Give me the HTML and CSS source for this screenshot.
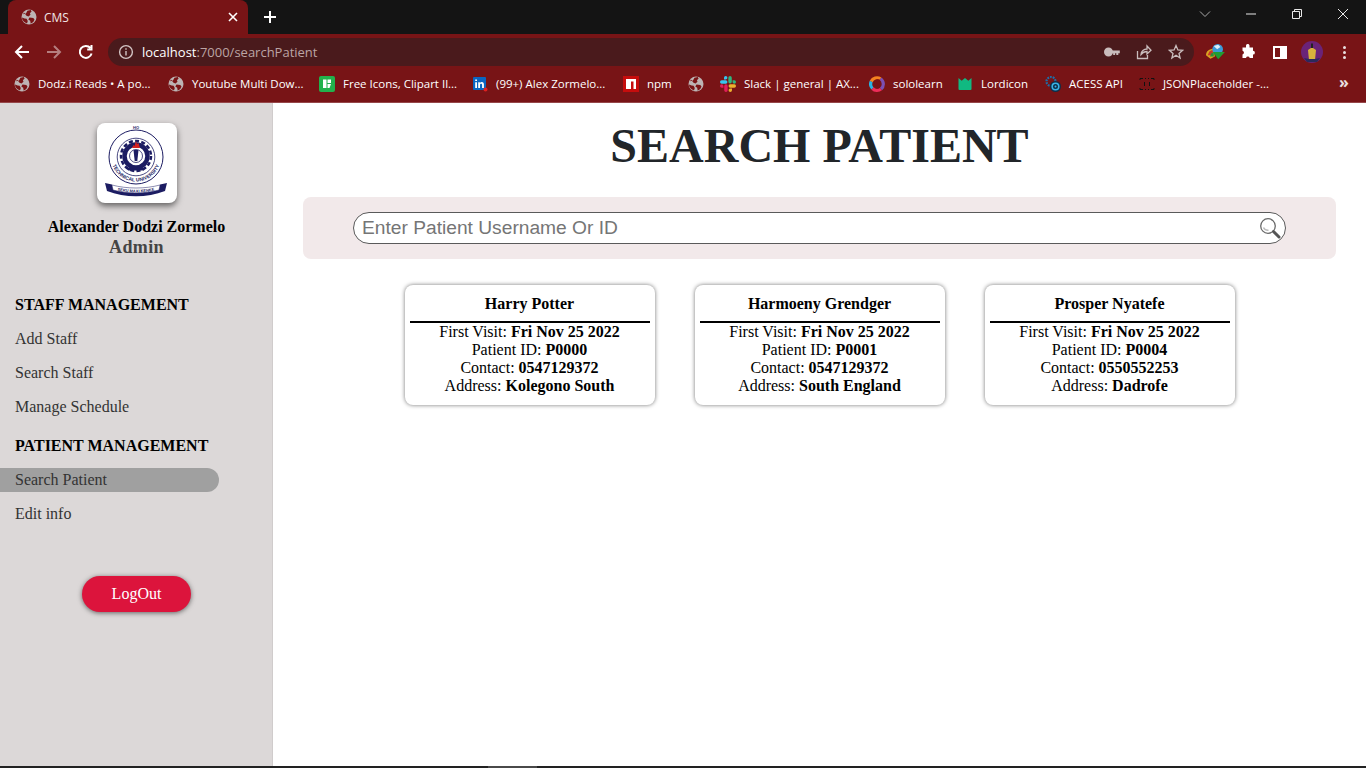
FILE: index.html
```html
<!DOCTYPE html>
<html lang="en">
<head>
<meta charset="utf-8">
<title>CMS</title>
<link rel="stylesheet" href="styles.css">
</head>
<body>
<svg class="defs" width="0" height="0" aria-hidden="true">
  <symbol id="globe" viewBox="0 0 16 16">
    <circle cx="8" cy="8" r="7.5" fill="#bdb4b4"/>
    <path d="M2.2 5.2 5 4.6l1.4-2.9L9.8.9l.8 1.6-1.7 1.8.6 1.4-2 1.900-2-.8L2.900 3.400ZM8.500 8.600l3.800.3 1.200 1.500-1.200 2.700-2.600 1.700-.5-3-1.900-1.300ZM1 8.500l2.600 1 2 .2 1.200 2.200-.8 2.600-2.400-1.200L1.400 11Z" fill="#7a1416"/>
  </symbol>
</svg>

<header class="chrome">
  <div class="tabstrip">
    <div class="tab">
      <svg class="ico16"><use href="#globe"/></svg>
      <span class="tab-title">CMS</span>
      <svg class="tab-close" viewBox="0 0 10 10"><path d="M1 1l8 8M9 1l-8 8"/></svg>
    </div>
    <svg class="newtab" viewBox="0 0 14 14"><path d="M7 1v12M1 7h12"/></svg>
    <div class="winbtns">
      <div class="winbtn"><svg viewBox="0 0 12 12"><path d="M1 3.500l5 5 5-5"/></svg></div>
      <div class="winbtn"><svg viewBox="0 0 12 12"><path d="M1 6h10"/></svg></div>
      <div class="winbtn"><svg viewBox="0 0 12 12"><path d="M1.500 3.500h7v7h-7zM3.500 3.500v-2h7v7h-2"/></svg></div>
      <div class="winbtn"><svg viewBox="0 0 12 12"><path d="M1 1l10 10M11 1L1 11"/></svg></div>
    </div>
  </div>

  <div class="toolbar">
    <div class="tbtn"><svg viewBox="0 0 16 16" class="nav"><path d="M15 8H2M8 2 2 8l6 6"/></svg></div>
    <div class="tbtn dim"><svg viewBox="0 0 16 16" class="nav"><path d="M1 8h13M8 2l6 6-6 6"/></svg></div>
    <div class="tbtn"><svg viewBox="0 0 16 16" class="nav"><path d="M13.600 9.500A6 6 0 1 1 12.400 4M13.500 1v4.400H9.200"/></svg></div>
    <div class="omnibox">
      <svg class="info" viewBox="0 0 16 16"><circle cx="8" cy="8" r="6.400"/><path d="M8 7v4.400M8 4.200v1.600"/></svg>
      <span class="url"><span class="host">localhost</span>:7000/searchPatient</span>
      <div class="omni-icons">
        <div class="tbtn"><svg viewBox="0 0 16 16" class="filled"><path d="M4.500 3.500a4.500 4.500 0 1 1 0 9 4.500 4.500 0 0 1 0-9Zm3.600 3H15.800v2.800H14.300v1.700h-2V9.300h-1.200v1.700H9.200V9.300H8.100Z"/></svg></div>
        <div class="tbtn"><svg viewBox="0 0 16 16" class="line"><path d="M1.500 7v7.500h10V11M5 10.500C5 7 8 5 11 5V2l4 4.300L11 10V7.500c-2.500 0-4.500 1-6 3Z"/></svg></div>
        <div class="tbtn"><svg viewBox="0 0 16 16" class="line"><path d="M8 1.500l1.900 4.400 4.700.4-3.600 3.100 1.100 4.700L8 11.200l-4.100 2.900L5 9.400 1.400 6.300l4.700-.4Z"/></svg></div>
      </div>
    </div>
    <div class="ext-icons">
      <div class="tbtn"><svg viewBox="0 0 18 16" class="raw"><path d="M0 11c0-4 3-6 7-6l1 7-4 2Z" fill="#d9a520"/><path d="M1.500 11 3 7.500l3-1.500.5 5Z" fill="#c8352b"/><path d="M3.500 12 5 9h2v3Z" fill="#2a8f3a"/><circle cx="10.500" cy="5.500" r="4.800" fill="#3a9ad9"/><path d="M7 2.500l4-1 2 2-3 2Z" fill="#dfeff8"/><path d="M6 8h11l-6 6.500Z" fill="#1f9d33"/></svg></div>
      <div class="tbtn"><svg viewBox="0 0 16 16" class="filled white"><path d="M6 1.500a1.800 1.800 0 0 1 3.500 0V3.500H13v3.300a1.900 1.900 0 0 1 0 3.800V14H9.700a1.900 1.900 0 0 0-3.700 0H2.500v-3.600a1.900 1.900 0 0 0 0-3.700V3.500H6Z"/></svg></div>
      <div class="tbtn"><div class="sidepanel"></div></div>
      <div class="tbtn"><svg viewBox="0 0 22 22" class="avatar"><circle cx="11" cy="11" r="11" fill="#6a2378"/><path d="M7 9l3-2V4h2v3l3 2-1 10H8Z" fill="#d9b23c"/><path d="M10 2.500h2V7h-2z" fill="#222"/><path d="M3 17l5 1h6l5-1-3 4H6Z" fill="#2b2a5a"/></svg></div>
      <div class="tbtn"><div class="dots"><i></i><i></i><i></i></div></div>
    </div>
  </div>

  <nav class="bookmarks">
    <a class="bm"><svg class="ico16"><use href="#globe"/></svg><span>Dodz.i Reads • A po...</span></a>
    <a class="bm"><svg class="ico16"><use href="#globe"/></svg><span>Youtube Multi Dow...</span></a>
    <a class="bm"><svg class="ico16" viewBox="0 0 16 16"><rect width="16" height="16" rx="2" fill="#22b14c"/><path d="M4 3.500h3.500V12H4zM8.500 3.500H12v3.500H8.500zM8.500 8H12l-1.500 4h-2z" fill="#fff"/></svg><span>Free Icons, Clipart Il...</span></a>
    <a class="bm"><svg class="ico16" viewBox="0 0 16 16"><rect x="1" y="1" width="13" height="13" rx="1" fill="#0a66c2"/><path d="M3.200 6.200h1.800V12H3.200zM3.200 3.400h1.800v1.700H3.200zM6.200 6.200h1.700V7c.4-.6 1-1 1.900-1 1.500 0 2.100 1 2.100 2.600V12h-1.800V9c0-.8-.3-1.300-1-1.300S8 8.200 8 9v3H6.200Z" fill="#fff"/><circle cx="13.500" cy="13.500" r="2" fill="#e02020"/></svg><span>(99+) Alex Zormelo...</span></a>
    <a class="bm"><svg class="ico16" viewBox="0 0 16 16"><rect width="16" height="16" fill="#c60d0d"/><path d="M3 3h10v10h-2.500V5.500H8V13H3Z" fill="#fff"/></svg><span>npm</span></a>
    <a class="bm"><svg class="ico16"><use href="#globe"/></svg></a>
    <a class="bm"><svg class="ico16" viewBox="1 1 14 14"><path d="M6 1a1.500 1.500 0 0 1 0 3H4.500V2.500A1.500 1.500 0 0 1 6 1ZM1 6.200a1.500 1.500 0 0 1 1.500-1.500H6a1.500 1.500 0 0 1 0 3H2.500A1.500 1.500 0 0 1 1 6.200Z" fill="#36c5f0"/><path d="M15 6.200a1.500 1.500 0 0 1-3 0V4.700h1.500A1.500 1.500 0 0 1 15 6.200ZM8.300 2.500a1.500 1.500 0 0 1 3 0V6a1.500 1.500 0 0 1-3 0Z" fill="#2eb67d"/><path d="M10 15a1.500 1.500 0 0 1 0-3h1.500v1.500A1.500 1.500 0 0 1 10 15ZM15 9.800a1.500 1.500 0 0 1-1.500 1.500H10a1.500 1.500 0 0 1 0-3h3.500A1.500 1.500 0 0 1 15 9.800Z" fill="#ecb22e"/><path d="M1 9.800a1.500 1.500 0 0 1 3 0v1.500H2.500A1.500 1.500 0 0 1 1 9.800ZM4.700 9.800a1.500 1.500 0 0 1 3 0v3.700a1.500 1.500 0 0 1-3 0Z" fill="#e01e5a"/></svg><span>Slack | general | AX...</span></a>
    <a class="bm"><svg class="ico16" viewBox="0 0 16 16" fill="none" stroke-width="3.200"><path d="M11.500 2.800A6.400 6.400 0 0 0 2.200 5.500" stroke="#f58220"/><path d="M2.200 5.500A6.400 6.400 0 0 0 3.500 12.500" stroke="#2bb3e3"/><path d="M3.500 12.500A6.400 6.400 0 0 0 12 13" stroke="#ee2d5a"/><path d="M12 13A6.400 6.400 0 0 0 11.500 2.800" stroke="#7b4fb5"/><path d="M11 4.500C8 3 5 5 6.500 7.500S11 9 9.500 12" stroke="#781416" stroke-width="1.500"/></svg><span>sololearn</span></a>
    <a class="bm"><svg class="ico16" viewBox="0 0 16 16"><path d="M1.500 2l3.200 2.800L8 2l3.300 2.800L14.500 2v11a1 1 0 0 1-1 1h-11a1 1 0 0 1-1-1Z" fill="#10b981"/></svg><span>Lordicon</span></a>
    <a class="bm"><svg class="ico16" viewBox="0 0 16 16"><circle cx="6" cy="5.500" r="4.500" fill="none" stroke="#1f6fa8" stroke-width="2.200" stroke-dasharray="1.800 1"/><circle cx="10.500" cy="10.500" r="5.500" fill="#0d2f4a"/><circle cx="10.500" cy="10.500" r="3.300" fill="none" stroke="#39b3e6" stroke-width="1.600"/><circle cx="10.500" cy="10.500" r="1" fill="#39b3e6"/></svg><span>ACESS API</span></a>
    <a class="bm"><svg class="ico16" viewBox="0 0 16 16"><path d="M1 4V2.500h3M12 2.500h3V4M1 12v1.500h3M12 13.500h3V12M6 2.500h1M9 2.500h1M6 13.500h1M9 13.500h1M5.500 6v4M10.500 6v4" fill="none" stroke="#111" stroke-width="1"/></svg><span>JSONPlaceholder -...</span></a>
    <span class="bm-more">»</span>
  </nav>
</header>

<div class="app">
  <aside class="sidebar">
    <div class="logo-card">
      <svg viewBox="0 0 80 80" class="logo">
        <circle cx="39" cy="34" r="27" fill="none" stroke="#1c1c62" stroke-width="1"/>
        <circle cx="39" cy="34" r="18.800" fill="none" stroke="#1c1c62" stroke-width="0.800"/>
        <circle cx="39" cy="33" r="15" fill="none" stroke="#1c1c62" stroke-width="2.500" stroke-dasharray="4 2.300"/>
        <circle cx="39" cy="33" r="11.500" fill="none" stroke="#1c1c62" stroke-width="4.500"/>
        <circle cx="39" cy="33" r="6.500" fill="none" stroke="#1c1c62" stroke-width="0.800"/>
        <path d="M36.500 27h5l-1.200 11h-2.600z" fill="#1c1c62"/>
        <path d="M35 25l1.500-3 1 1 1.500-5 1 3 1.500-1 1.500 5Z" fill="#d42020"/>
        <path d="M30 45h18l-1 2.500H31Z" fill="#1c1c62"/>
        <text x="39" y="6" class="logo-top">HO</text>
        <path id="logoarc" d="M15.500 42a25 25 0 0 0 47 0" fill="none"/>
        <text class="logo-arc"><textPath href="#logoarc" startOffset="50%" text-anchor="middle">TECHNICAL UNIVERSITY</textPath></text>
        <path d="M8 60l7 1.500 1 3.500c14 3 32 3 46 0l1-3.500 7-1.500-2 8c-18 7-40 7-58 0Z" fill="#1c1c62"/>
        <path d="M15 62c15 4 33 4 48 0l-1 5c-14 4-32 4-46 0Z" fill="#fff" stroke="#1c1c62" stroke-width="0.500"/>
        <path id="logobanner" d="M17 66.500c14 4 30 4 44 0" fill="none"/>
        <text class="logo-banner"><textPath href="#logobanner" startOffset="50%" text-anchor="middle">SEKU MAXI KENKE</textPath></text>
      </svg>
    </div>
    <div class="user-name">Alexander Dodzi Zormelo</div>
    <div class="user-role">Admin</div>
    <h2 class="nav-title staff">STAFF MANAGEMENT</h2>
    <a class="nav-link">Add Staff</a>
    <a class="nav-link">Search Staff</a>
    <a class="nav-link">Manage Schedule</a>
    <h2 class="nav-title">PATIENT MANAGEMENT</h2>
    <a class="nav-link active">Search Patient</a>
    <a class="nav-link">Edit info</a>
    <button class="logout">LogOut</button>
  </aside>

  <main class="main">
    <h1 class="title">SEARCH PATIENT</h1>
    <section class="search-panel">
      <div class="search-box">
        <input class="search-input" type="text" placeholder="Enter Patient Username Or ID">
        <svg class="search-icon" viewBox="0 0 22 22">
          <circle cx="9" cy="9" r="7.300" fill="#fff" stroke="#6a6a6a" stroke-width="1.300"/>
          <path d="M4.500 10.500c1 2 3 3 5 2.800" fill="none" stroke="#bbb" stroke-width="1.500"/>
          <path d="M14.500 14.500l5.500 5.500" stroke="#555" stroke-width="3" stroke-linecap="round"/>
        </svg>
      </div>
    </section>
    <section class="cards">
      <article class="card">
        <div class="card-name">Harry Potter</div>
        <hr class="card-rule">
        <div>First Visit: <b>Fri Nov 25 2022</b></div>
        <div>Patient ID: <b>P0000</b></div>
        <div>Contact: <b>0547129372</b></div>
        <div>Address: <b>Kolegono South</b></div>
      </article>
      <article class="card">
        <div class="card-name">Harmoeny Grendger</div>
        <hr class="card-rule">
        <div>First Visit: <b>Fri Nov 25 2022</b></div>
        <div>Patient ID: <b>P0001</b></div>
        <div>Contact: <b>0547129372</b></div>
        <div>Address: <b>South England</b></div>
      </article>
      <article class="card">
        <div class="card-name">Prosper Nyatefe</div>
        <hr class="card-rule">
        <div>First Visit: <b>Fri Nov 25 2022</b></div>
        <div>Patient ID: <b>P0004</b></div>
        <div>Contact: <b>0550552253</b></div>
        <div>Address: <b>Dadrofe</b></div>
      </article>
    </section>
  </main>
</div>
<div class="screen-edge"><span class="edge-seg"></span></div>
</body>
</html>
```

FILE: styles.css
```css
* { box-sizing: border-box; }
html, body { height: 100%; }
body {
  margin: 0;
  display: flex;
  flex-direction: column;
  overflow: hidden;
  background: #fff;
  font-family: "Liberation Serif", "Times New Roman", serif;
  font-size: 16px;
  color: #000;
}
.defs { position: absolute; }

/* Browser chrome */
.chrome {
  flex: none;
  height: 103px;
  background: #781416;
  border-bottom: 1px solid #96474a;
  font-family: "Open Sans", "Noto Sans", sans-serif;
  color: #fff;
}
.tabstrip {
  height: 34px;
  display: flex;
  align-items: center;
  background: #141414;
  padding-left: 8px;
}
.tab {
  align-self: stretch;
  width: 240px;
  display: flex;
  align-items: center;
  gap: 7px;
  padding: 0 10px 0 13px;
  background: #781416;
  border-radius: 8px 8px 0 0;
  font-size: 12px;
}
.ico16 { width: 16px; height: 16px; flex: none; }
.tab-title { flex: 1; color: #f1e4e4; }
.tab-close { width: 10px; height: 10px; fill: none; stroke: #fff; stroke-width: 1.6; }
.newtab { width: 14px; height: 14px; margin-left: 15px; fill: none; stroke: #fff; stroke-width: 2; }
.winbtns { margin-left: auto; display: flex; align-self: stretch; }
.winbtn { width: 46px; display: flex; align-items: center; justify-content: center; padding-bottom: 6px; }
.winbtn svg { width: 12px; height: 12px; fill: none; stroke: #e8e8e8; stroke-width: 1; }
.winbtn:first-child svg { stroke: #a8a8a8; }

.toolbar {
  height: 33px;
  display: flex;
  align-items: center;
  padding: 3px 0 0 6px;
}
.tbtn { width: 32px; height: 28px; flex: none; display: flex; align-items: center; justify-content: center; }
.tbtn svg { width: 16px; height: 16px; }
.nav { fill: none; stroke: #fff; stroke-width: 2; }
.dim { opacity: .45; }
.omnibox {
  width: 1086px;
  height: 28px;
  margin: 0 6px;
  display: flex;
  align-items: center;
  padding: 0 2px 0 10px;
  background: #4a1a1c;
  border-radius: 14px;
}
.info { width: 16px; height: 16px; fill: none; stroke: #d2c4c4; stroke-width: 1.400; flex: none; }
.url { margin-left: 8px; color: #bca4a4; font-size: 13px; }
.host { color: #fff; }
.omni-icons { margin-left: auto; display: flex; }
.filled { fill: #c9bcbc; }
.filled.white { fill: #fff; }
.line { fill: none; stroke: #c9bcbc; stroke-width: 1.300; }
.ext-icons { display: flex; }
.tbtn .raw { width: 20px; height: 18px; }
.tbtn .avatar { width: 22px; height: 22px; }
.sidepanel {
  width: 14px;
  height: 13px;
  border: 2px solid #fff;
  border-right-width: 7px;
  background: #781416;
}
.dots { display: flex; flex-direction: column; gap: 2px; }
.dots i { width: 3px; height: 3px; border-radius: 50%; background: #e8e0e0; }

.bookmarks {
  height: 35px;
  display: grid;
  grid-template-columns: 154px 151px 153px 151px 65px 32px 149px 88px 88px 94px 1fr 27px;
  align-items: center;
  padding: 0 0 2px 14px;
  font-size: 11.5px;
  color: #fff;
}
.bm { display: flex; align-items: center; gap: 8px; white-space: nowrap; min-width: 0; }
.bm-more { grid-column: 12; font-size: 16px; line-height: 1; font-weight: 700; color: #e8e0e0; margin-top: -3px; }

/* App */
.app { flex: 1; min-height: 0; display: flex; }
.sidebar {
  flex: none;
  width: 273px;
  display: flex;
  flex-direction: column;
  background: #dcd8d8;
  box-shadow: inset -1px 0 0 #d0cccc;
  padding-top: 20px;
}
.logo-card {
  align-self: center;
  width: 80px;
  height: 80px;
  margin-left: 1px;
  background: #fff;
  border-radius: 8px;
  box-shadow: 0 3px 6px rgba(0,0,0,.55);
}
.logo { display: block; width: 80px; height: 80px; overflow: hidden; }
.logo-top { font: 700 4px "Liberation Sans", sans-serif; text-anchor: middle; fill: #1c1c62; }
.logo-arc { font: 700 5px "Liberation Sans", sans-serif; fill: #1c1c62; }
.logo-banner { font: 700 4px "Liberation Sans", sans-serif; fill: #1c1c62; }
.user-name { margin-top: 15px; text-align: center; font-weight: 700; line-height: 18px; }
.user-role { margin-top: 1px; text-align: center; font-weight: 700; font-size: 18px; line-height: 21px; letter-spacing: .4px; color: #444; }
.nav-title {
  margin: 15px 0 0;
  padding-left: 15px;
  font-size: 16px;
  font-weight: 700;
  line-height: 24px;
}
.nav-title.staff { margin-top: 35px; }
.nav-link {
  display: block;
  width: 219px;
  height: 24px;
  padding-left: 15px;
  margin-top: 10px;
  line-height: 24px;
  color: #333;
}
.active { background: #a0a0a0; border-radius: 0 12px 12px 0; }
.logout {
  align-self: flex-start;
  width: 109px;
  height: 36px;
  margin: 50px 0 0 82px;
  border: 0;
  border-radius: 18px;
  background: #dc143c;
  box-shadow: 0 1px 5px rgba(0,0,0,.55);
  color: #fff;
  font: 16px "Liberation Serif", serif;
}

.main { flex: 1; min-width: 0; padding: 0 30px; display: flex; flex-direction: column; }
.title {
  margin: 0;
  height: 94px;
  padding-top: 15px;
  text-align: center;
  font-size: 48px;
  line-height: 56px;
  font-weight: 700;
  color: #212529;
}
.search-panel {
  height: 62px;
  padding: 15px 50px;
  background: #f2e9ea;
  border-radius: 8px;
}
.search-box {
  height: 32px;
  display: flex;
  align-items: center;
  padding: 0 4px 0 8px;
  background: #fff;
  border: 1px solid #5a5a5a;
  border-radius: 16px;
}
.search-input {
  flex: 1;
  min-width: 0;
  border: 0;
  outline: 0;
  background: none;
  padding: 0;
  font: 19.2px "Liberation Sans", Arial, sans-serif;
}
.search-icon { width: 22px; height: 22px; flex: none; }
.cards { margin-top: 26px; display: flex; justify-content: center; gap: 40px; }
.card {
  width: 250px;
  height: 120px;
  padding: 0 5px;
  background: #fff;
  border-radius: 8px;
  box-shadow: 0 0 4px rgba(0,0,0,.55);
  text-align: center;
  line-height: 18px;
}
.card-name { font-weight: 700; height: 36px; padding-top: 10px; }
.card-rule { margin: 0; height: 2px; border: 0; background: #000; }
.screen-edge { flex: none; height: 2px; background: #222; padding-left: 488px; display: flex; }
.edge-seg { width: 49px; background: #4a4a4a; }
```
